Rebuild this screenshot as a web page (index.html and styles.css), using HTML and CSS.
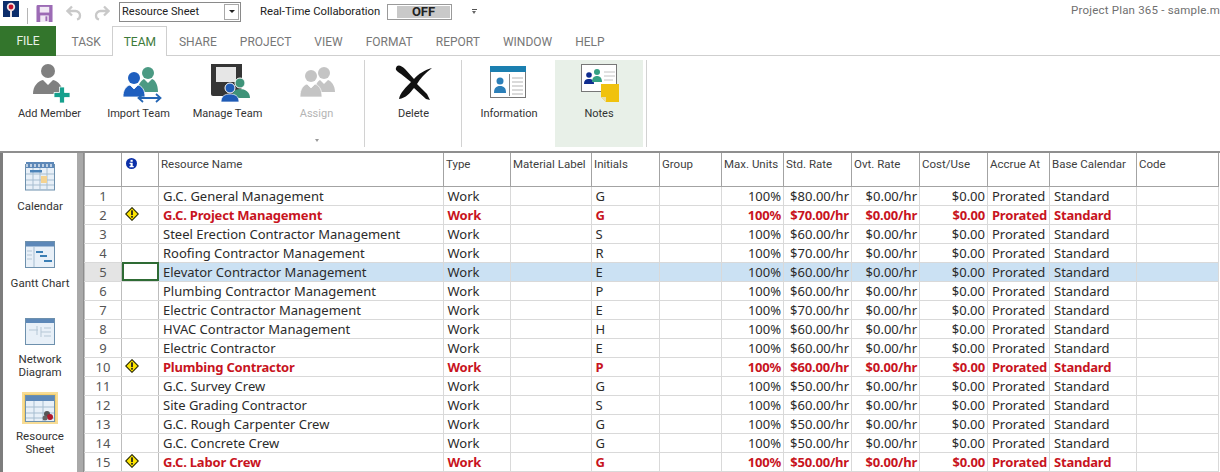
FILE: index.html
```html
<!DOCTYPE html>
<html lang="en">
<head>
<meta charset="utf-8">
<title>Project Plan 365 - Resource Sheet</title>
<link rel="stylesheet" href="styles.css">
</head>
<body>
<svg class="defs" width="0" height="0" aria-hidden="true">
  <defs>
    <symbol id="warn" viewBox="0 0 16 16">
      <path d="M8 .8 15.2 8 8 15.2.8 8Z" fill="#ffe600" stroke="#2a2a00" stroke-width="1.3"/>
      <rect x="7" y="3.8" width="2" height="5.4" fill="#222"/>
      <rect x="7" y="10.2" width="2" height="2" fill="#222"/>
    </symbol>
  </defs>
</svg>
<div class="app">
  <header class="titlebar">
    <svg class="logo" width="16" height="17" viewBox="0 0 16 17"><rect width="16" height="16" fill="#0c2d6b"/><circle cx="8" cy="6" r="4.2" fill="#f2dfe0"/><circle cx="8" cy="6" r="2.4" fill="#c5122c"/><rect x="7" y="10" width="2" height="6" fill="#e9e3e3"/></svg>
    <span class="qsep"></span>
    <svg class="qicon save" width="17" height="17" viewBox="0 0 17 18"><path d="M0 1.5A1.5 1.5 0 0 1 1.500 0H17V18H0Z" fill="#9c6bb5"/><rect x="3.500" y="2" width="10" height="6" fill="#f1e9f5"/><rect x="4" y="11" width="9" height="7" fill="#f1e9f5"/><rect x="9.500" y="12" width="2" height="5" fill="#9c6bb5"/></svg>
    <svg class="qicon undo" width="16" height="16" viewBox="0 0 16 16"><path d="M6 1.500 1.500 6 6 10.500M2 6H9.500A4.500 4.500 0 0 1 14 10.500 4 4 0 0 1 11 14.500" fill="none" stroke="#c9c9c9" stroke-width="2.300"/></svg>
    <svg class="qicon redo" width="16" height="16" viewBox="0 0 16 16"><path d="M10 1.500 14.500 6 10 10.500M14 6H6.500A4.500 4.500 0 0 0 2 10.500 4 4 0 0 0 5 14.500" fill="none" stroke="#c9c9c9" stroke-width="2.300"/></svg>
    <div class="combo"><span class="combo-text">Resource Sheet</span><span class="combo-btn"><i class="caret"></i></span></div>
    <span class="rtc">Real-Time Collaboration</span>
    <div class="toggle"><span class="toggle-knob"></span><span class="toggle-off">OFF</span></div>
    <span class="qat-more"><i class="bar"></i><i class="caret small"></i></span>
    <span class="apptitle">Project Plan 365 - sample.m</span>
  </header>

  <nav class="tabs">
    <span class="tab file">FILE</span>
    <span class="tab">TASK</span>
    <span class="tab active">TEAM</span>
    <span class="tab">SHARE</span>
    <span class="tab">PROJECT</span>
    <span class="tab">VIEW</span>
    <span class="tab">FORMAT</span>
    <span class="tab">REPORT</span>
    <span class="tab">WINDOW</span>
    <span class="tab">HELP</span>
  </nav>

  <section class="ribbon">
    <div class="group team">
      <div class="rbtn">
        <svg class="ricon" viewBox="0 0 48 44"><circle cx="22" cy="10" r="7" fill="#808080"/><path d="M7 33C7 25 12 20 17 19L22 24 27 19C32 20 37 25 37 33Z" fill="#808080"/><path d="M33.500 26H38.500V31.500H44V36.500H38.500V42H33.500V36.500H28V31.500H33.500Z" fill="#16a08d" stroke="#fff" stroke-width=".8"/></svg>
        <span>Add Member</span>
      </div>
      <div class="rbtn">
        <svg class="ricon" viewBox="0 0 48 44"><circle cx="33" cy="12" r="6" fill="#4b9a83"/><path d="M23 30C23 22 27 19 29 18L33 22 37 18C40 19 43 23 43 31H23Z" fill="#4b9a83"/><circle cx="19" cy="17" r="6" fill="#1f5fbf"/><path d="M8 36C8 29 11 25 15 24L19 28 23 24C27 25 30 29 30 36Z" fill="#1f5fbf" stroke="#fff" stroke-width=".8"/><path d="M24 37H45M28 33 23.500 37 28 41M41 33 45.500 37 41 41" fill="none" stroke="#2465b4" stroke-width="1.800"/></svg>
        <span>Import Team</span>
      </div>
      <div class="rbtn">
        <svg class="ricon" viewBox="0 0 48 44"><path d="M7 3H38V27L26 35H9A2 2 0 0 1 7 33Z" fill="#353535"/><rect x="12" y="6" width="20" height="15" fill="#e6e6e6"/><circle cx="36" cy="22" r="5" fill="#3f9379" stroke="#fff"/><path d="M28 37C28 31 31 28 36 28S46 31 46 37Z" fill="#3f9379"/><circle cx="26" cy="27" r="5" fill="#1f5bb5" stroke="#fff"/><path d="M17 41C17 35 21 33 26 33S35 35 35 41Z" fill="#1f5bb5" stroke="#fff" stroke-width=".7"/></svg>
        <span>Manage Team</span>
      </div>
      <div class="rbtn disabled">
        <svg class="ricon" viewBox="0 0 48 44"><circle cx="31" cy="12" r="6" fill="#c4c4c4"/><path d="M22 31C22 23 25 20 27 19L31 23 35 19C38 20 42 24 42 31Z" fill="#c4c4c4"/><circle cx="18" cy="15" r="6" fill="#c4c4c4"/><path d="M7 36C7 27 11 24 14 23L18 27 22 23C25 24 29 27 29 36Z" fill="#c4c4c4" stroke="#fff" stroke-width=".7"/></svg>
        <span>Assign</span>
        <i class="caret small assign-caret"></i>
      </div>
    </div>
    <div class="group delete">
      <div class="rbtn wide">
        <svg class="ricon" viewBox="0 0 48 44"><path d="M6 7C7 3 11 4 15 8L24 18C28 13 35 9 42 7 35 12 30 18 27 23L37 33 40 39 36 38 24 27C20 32 16 37 9 38 10 32 16 26 21 21L11 13C8 11 5 9 6 7Z" fill="#111"/></svg>
        <span>Delete</span>
      </div>
    </div>
    <div class="group info">
      <div class="rbtn info-btn">
        <svg class="ricon" viewBox="0 0 48 44"><rect x="5.500" y="5.500" width="35" height="31" fill="#fff" stroke="#777"/><rect x="5" y="5" width="36" height="6" fill="#1b7fb0"/><circle cx="15" cy="20" r="3.500" fill="#2c7fb8"/><path d="M9 32C9 27 11 25 15 25S21 27 21 32Z" fill="#2c7fb8"/><path d="M24.500 13V35" stroke="#888"/><path d="M27 17H38M27 21H38M27 25H38M27 29H38M27 33H38" stroke="#b5b5b5"/></svg>
        <span>Information</span>
      </div>
      <div class="rbtn notes">
        <svg class="ricon" viewBox="0 0 48 44"><rect x="6.500" y="3.500" width="35" height="27" fill="#fff" stroke="#777"/><circle cx="14" cy="14" r="2.800" fill="#0f2d8f"/><path d="M9 23C9 19 11 18 14 18S19 19 19 23Z" fill="#0f2d8f"/><circle cx="22" cy="11" r="3" fill="#35a184"/><path d="M17 21C17 17 19 15 22 15S27 17 27 21Z" fill="#35a184"/><path d="M29 11H40M29 15H40M29 19H38" stroke="#c4c4c4"/><path d="M26 23H44V41H31L26 36Z" fill="#f0c20e"/><path d="M26 36H31V41Z" fill="#e7dfae"/></svg>
        <span>Notes</span>
      </div>
    </div>
  </section>

  <main class="workspace">
    <aside class="viewbar">
      <div class="view">
        <svg class="vicon" width="30" height="30" viewBox="0 0 30 30"><rect x=".5" y="3.500" width="29" height="25.500" fill="#e8f0f8" stroke="#6d90ad"/><rect x="1" y="1" width="28" height="6" fill="#5d88b8"/><path d="M2 3V6M6 3V6M10 3V6M14 3V6M18 3V6M22 3V6M26 3V6" stroke="#fff" stroke-width="1.200"/><path d="M1 13H29M1 19H29M1 24H29M8 7V29M15 7V29M22 7V29" stroke="#a6bdd0"/><rect x="5" y="9" width="12" height="2.500" fill="#4c84b9"/><rect x="16" y="15" width="6" height="7" fill="#f4d392"/></svg>
        <span>Calendar</span>
      </div>
      <div class="view">
        <svg class="vicon" width="30" height="27" viewBox="0 0 30 27"><rect x=".5" y=".5" width="29" height="26" fill="#e8f0f8" stroke="#6d90ad"/><rect x="1" y="1" width="28" height="4.500" fill="#5d88b8"/><path d="M9 6V26" stroke="#a6bdd0"/><rect x="11" y="10" width="7" height="2" fill="#3b7fb5"/><rect x="15" y="14" width="7" height="2" fill="#3b7fb5"/><rect x="19" y="19" width="8" height="2" fill="#3b7fb5"/><path d="M2 10H7M2 14H7M2 18H7" stroke="#b5c7d6"/></svg>
        <span>Gantt Chart</span>
      </div>
      <div class="view">
        <svg class="vicon" width="30" height="27" viewBox="0 0 30 27"><rect x=".5" y=".5" width="29" height="26" fill="#e8f0f8" stroke="#6d90ad"/><rect x="1" y="1" width="28" height="4" fill="#5d88b8"/><path d="M4 12H13M16 9V19M16 14H26M19 10H26M19 18H26M12 8V17" stroke="#b5c7d6"/></svg>
        <span>Network<br>Diagram</span>
      </div>
      <div class="view current">
        <span class="vframe">
          <svg width="30" height="27" viewBox="0 0 30 27"><rect x=".5" y=".5" width="29" height="26" fill="#e8f0f8" stroke="#6d90ad"/><rect x="1" y="1" width="28" height="5" fill="#5d88b8"/><path d="M1 12H29M1 18H29M1 23H29M9 6V26M18 6V26" stroke="#a6bdd0"/><circle cx="22" cy="19" r="3" fill="#555"/><circle cx="25" cy="22" r="3" fill="#b1182a"/><circle cx="20" cy="23" r="2.500" fill="#666"/></svg>
        </span>
        <span>Resource<br>Sheet</span>
      </div>
    </aside>
    <div class="splitter"></div>
    <div class="sheet">
      <table class="grid">
        <colgroup>
          <col class="c-id"><col class="c-ind"><col class="c-name"><col class="c-type"><col class="c-mat"><col class="c-ini"><col class="c-grp"><col class="c-max"><col class="c-std"><col class="c-ovt"><col class="c-cost"><col class="c-acc"><col class="c-base"><col class="c-code">
        </colgroup>
        <thead>
          <tr>
            <th></th>
            <th><svg class="infoicon" width="11" height="11" viewBox="0 0 11 11"><circle cx="5.500" cy="5.500" r="5.500" fill="#0b2fa8"/><rect x="4.500" y="1.800" width="2.200" height="2" fill="#fff"/><path d="M3.500 4.700H6.700V8H7.700V9.300H3.500V8H4.500V6H3.500Z" fill="#fff"/></svg></th>
            <th>Resource Name</th><th>Type</th><th>Material Label</th><th>Initials</th><th>Group</th><th>Max. Units</th><th>Std. Rate</th><th>Ovt. Rate</th><th>Cost/Use</th><th>Accrue At</th><th>Base Calendar</th><th>Code</th>
          </tr>
        </thead>
        <tbody>
          <tr><td class="id">1</td><td></td><td class="name">G.C. General Management</td><td>Work</td><td></td><td>G</td><td></td><td class="num">100%</td><td class="num">$80.00/hr</td><td class="num">$0.00/hr</td><td class="num">$0.00</td><td>Prorated</td><td>Standard</td><td></td></tr>
          <tr class="over"><td class="id">2</td><td class="ind"><svg class="warn"><use href="#warn"/></svg></td><td class="name">G.C. Project Management</td><td>Work</td><td></td><td>G</td><td></td><td class="num">100%</td><td class="num">$70.00/hr</td><td class="num">$0.00/hr</td><td class="num">$0.00</td><td>Prorated</td><td>Standard</td><td></td></tr>
          <tr><td class="id">3</td><td></td><td class="name">Steel Erection Contractor Management</td><td>Work</td><td></td><td>S</td><td></td><td class="num">100%</td><td class="num">$60.00/hr</td><td class="num">$0.00/hr</td><td class="num">$0.00</td><td>Prorated</td><td>Standard</td><td></td></tr>
          <tr><td class="id">4</td><td></td><td class="name">Roofing Contractor Management</td><td>Work</td><td></td><td>R</td><td></td><td class="num">100%</td><td class="num">$70.00/hr</td><td class="num">$0.00/hr</td><td class="num">$0.00</td><td>Prorated</td><td>Standard</td><td></td></tr>
          <tr class="selected"><td class="id">5</td><td class="cursor"></td><td class="name">Elevator Contractor Management</td><td>Work</td><td></td><td>E</td><td></td><td class="num">100%</td><td class="num">$60.00/hr</td><td class="num">$0.00/hr</td><td class="num">$0.00</td><td>Prorated</td><td>Standard</td><td></td></tr>
          <tr><td class="id">6</td><td></td><td class="name">Plumbing Contractor Management</td><td>Work</td><td></td><td>P</td><td></td><td class="num">100%</td><td class="num">$60.00/hr</td><td class="num">$0.00/hr</td><td class="num">$0.00</td><td>Prorated</td><td>Standard</td><td></td></tr>
          <tr><td class="id">7</td><td></td><td class="name">Electric Contractor Management</td><td>Work</td><td></td><td>E</td><td></td><td class="num">100%</td><td class="num">$70.00/hr</td><td class="num">$0.00/hr</td><td class="num">$0.00</td><td>Prorated</td><td>Standard</td><td></td></tr>
          <tr><td class="id">8</td><td></td><td class="name">HVAC Contractor Management</td><td>Work</td><td></td><td>H</td><td></td><td class="num">100%</td><td class="num">$60.00/hr</td><td class="num">$0.00/hr</td><td class="num">$0.00</td><td>Prorated</td><td>Standard</td><td></td></tr>
          <tr><td class="id">9</td><td></td><td class="name">Electric Contractor</td><td>Work</td><td></td><td>E</td><td></td><td class="num">100%</td><td class="num">$60.00/hr</td><td class="num">$0.00/hr</td><td class="num">$0.00</td><td>Prorated</td><td>Standard</td><td></td></tr>
          <tr class="over"><td class="id">10</td><td class="ind"><svg class="warn"><use href="#warn"/></svg></td><td class="name">Plumbing Contractor</td><td>Work</td><td></td><td>P</td><td></td><td class="num">100%</td><td class="num">$60.00/hr</td><td class="num">$0.00/hr</td><td class="num">$0.00</td><td>Prorated</td><td>Standard</td><td></td></tr>
          <tr><td class="id">11</td><td></td><td class="name">G.C. Survey Crew</td><td>Work</td><td></td><td>G</td><td></td><td class="num">100%</td><td class="num">$50.00/hr</td><td class="num">$0.00/hr</td><td class="num">$0.00</td><td>Prorated</td><td>Standard</td><td></td></tr>
          <tr><td class="id">12</td><td></td><td class="name">Site Grading Contractor</td><td>Work</td><td></td><td>S</td><td></td><td class="num">100%</td><td class="num">$60.00/hr</td><td class="num">$0.00/hr</td><td class="num">$0.00</td><td>Prorated</td><td>Standard</td><td></td></tr>
          <tr><td class="id">13</td><td></td><td class="name">G.C. Rough Carpenter Crew</td><td>Work</td><td></td><td>G</td><td></td><td class="num">100%</td><td class="num">$50.00/hr</td><td class="num">$0.00/hr</td><td class="num">$0.00</td><td>Prorated</td><td>Standard</td><td></td></tr>
          <tr><td class="id">14</td><td></td><td class="name">G.C. Concrete Crew</td><td>Work</td><td></td><td>G</td><td></td><td class="num">100%</td><td class="num">$50.00/hr</td><td class="num">$0.00/hr</td><td class="num">$0.00</td><td>Prorated</td><td>Standard</td><td></td></tr>
          <tr class="over"><td class="id">15</td><td class="ind"><svg class="warn"><use href="#warn"/></svg></td><td class="name">G.C. Labor Crew</td><td>Work</td><td></td><td>G</td><td></td><td class="num">100%</td><td class="num">$50.00/hr</td><td class="num">$0.00/hr</td><td class="num">$0.00</td><td>Prorated</td><td>Standard</td><td></td></tr>
        </tbody>
      </table>
    </div>
  </main>
</div>
</body>
</html>
```

FILE: styles.css
```css
* { box-sizing: border-box; }
html, body { margin: 0; padding: 0; height: 100%; background: #fff; overflow: hidden; }
body { font-family: "Noto Sans", "Open Sans", sans-serif; color: #2b2b2b; }
.defs { display: block; height: 0; }
.app { width: 1220px; height: 472px; display: flex; flex-direction: column; overflow: hidden; }

/* title bar */
.titlebar { height: 26px; flex: none; display: flex; align-items: center; padding-bottom: 3px; position: relative; font-family: Roboto, sans-serif; font-size: 11px; white-space: nowrap; }
.logo { margin: 0 0 5px 3px; flex: none; }
.qsep { width: 1px; height: 16px; background: #b5b5b5; margin: 8px 0 0 8px; flex: none; }
.qicon { flex: none; }
.save { margin-left: 8px; margin-top: 3px; }
.undo { margin-left: 13px; margin-top: 3px; }
.redo { margin-left: 12px; margin-top: 3px; }
.combo { width: 122px; height: 20px; border: 1px solid #8a8a8a; display: flex; align-items: center; justify-content: space-between; padding: 1px; flex: none; margin-left: 9px; }
.combo-text { font-size: 11px; color: #222; padding-left: 1px; letter-spacing: .05px; }
.combo-btn { width: 15px; height: 16px; border: 1px solid #a8a8a8; display: flex; align-items: center; justify-content: center; }
.caret { display: block; width: 0; height: 0; border-left: 3px solid transparent; border-right: 3px solid transparent; border-top: 3px solid #222; }
.caret.small { border-left-width: 2.500px; border-right-width: 2.500px; border-top-width: 3px; border-top-color: #666; }
.rtc { margin-left: 19px; font-size: 11.300px; color: #222; width: 127px; flex: none; }
.toggle { width: 65px; height: 16px; border: 1px solid #9a9a9a; padding: 1px; display: flex; flex: none; }
.toggle-knob { width: 8px; background: #fff; }
.toggle-off { flex: 1; background: #c9c9c9; text-align: center; font-weight: 700; font-size: 13px; line-height: 12px; color: #222; }
.qat-more { margin-left: 19px; display: flex; flex-direction: column; align-items: center; gap: 1px; flex: none; width: 6px; }
.qat-more .bar { display: block; width: 5px; height: 1px; background: #555; }
.apptitle { position: absolute; left: 1071px; top: 3px; font-size: 11.500px; color: #6f6f6f; letter-spacing: .2px; }

/* tabs */
.tabs { height: 30px; flex: none; display: flex; align-items: stretch; border-bottom: 1px solid #cfcfcf; font-family: Roboto, sans-serif; font-size: 12px; color: #777; }
.tab { display: flex; align-items: center; padding: 0 10.500px; margin-bottom: -1px; border: 1px solid transparent; border-bottom: 0; }
.tab.file { width: 56px; justify-content: center; padding: 0; background: #33752c; color: #e9f2e7; border: 0; margin-right: 4px; height: 30px; }
.tab.active { background: #fff; color: #3d7a3a; border-color: #cfcfcf; }

/* ribbon */
.ribbon { height: 95px; flex: none; display: flex; padding: 5px 0 4px 5px; font-family: Roboto, sans-serif; font-size: 11px; }
.group { display: flex; border-right: 1px solid #d2d2d2; padding-right: 3px; margin-top: -1px; }
.group.delete { padding-right: 0; margin-left: 1px; }
.group.info { margin-left: 1px; padding-right: 3px; }
.rbtn { width: 89px; display: flex; flex-direction: column; align-items: center; padding-top: 1px; color: #333; position: relative; }
.rbtn.wide { width: 95px; }
.rbtn.info-btn { width: 92px; }
.rbtn.notes { width: 88px; background: #e8f0e8; }
.rbtn span { line-height: 16px; margin-top: 1px; }
.ricon { width: 48px; height: 44px; display: block; margin-bottom: 0; }
.rbtn.disabled { color: #b4b4b4; }
.assign-caret { position: absolute; left: 43px; top: 79px; border-top-color: #999 !important; }

/* workspace */
.workspace { flex: 1; min-height: 0; display: flex; border-top: 2px solid #8f8f8f; }
.viewbar { width: 77px; flex: none; border-left: 3px solid #7d7d7d; display: flex; flex-direction: column; font-family: Roboto, sans-serif; font-size: 11.500px; color: #333; padding-top: 8px; margin-left: 0; background: #fff; }
.view { height: 77px; flex: none; display: flex; flex-direction: column; align-items: center; text-align: center; line-height: 13px; }
.view:nth-child(1) { padding-top: 0; }
.view:nth-child(1) span { margin-top: 9px; }
.view:nth-child(2) { padding-top: 3px; }
.view:nth-child(2) span { margin-top: 9px; }
.view:nth-child(3) { padding-top: 3px; }
.view:nth-child(3) span { margin-top: 8px; }
.vicon { display: block; flex: none; }
.vframe { display: flex; width: 36px; height: 32px; background: #f5cf6d; border: 2px solid #f7dc95; align-items: center; justify-content: center; margin-bottom: 6px; flex: none; }
.view.current { padding-top: 0; }
.splitter { width: 7px; flex: none; background: #a9a9a9; border-right: 1px solid #8d8d8d; }

/* sheet */
.sheet { flex: 1; min-width: 0; overflow: hidden; }
.grid { table-layout: fixed; width: 1134px; border-collapse: collapse; font-size: 13px; color: #2b2b2b; }
.c-id { width: 37px; }
.c-ind { width: 37px; }
.c-name { width: 285px; }
.c-type { width: 67px; }
.c-mat { width: 81px; }
.c-ini { width: 68px; }
.c-grp { width: 62px; }
.c-max { width: 62px; }
.c-std { width: 68px; }
.c-ovt { width: 68px; }
.c-cost { width: 68px; }
.c-acc { width: 62px; }
.c-base { width: 87px; }
.c-code { width: 82px; }
th { height: 33px; font-weight: 400; font-family: Roboto, sans-serif; font-size: 11.500px; color: #404040; text-align: left; vertical-align: top; padding: 4px 0 0 2px; border: 1px solid #a3a3a3; border-top: 0; white-space: nowrap; overflow: hidden; }
th:first-child { border-left: 1px solid #a3a3a3; }
.infoicon { display: block; margin: 1px 0 0 2px; }
td { height: 19px; padding: 0 0 0 3.500px; border: 1px solid #d9d9d9; border-top: 0; line-height: 18px; white-space: nowrap; overflow: hidden; }
td:first-child, td:nth-child(2) { border-right-color: #bdbdbd; }
td:nth-child(12), td:nth-child(13) { padding-left: 4px; }
td.id { text-align: center; padding: 0; color: #555; border-left: 1px solid #bdbdbd; }
td.name { padding-left: 4px; }
td.num { text-align: right; padding: 0 2px 0 0; }
.ind { padding: 0 0 0 3px; vertical-align: top; }
.warn { display: block; width: 14px; height: 14px; margin-top: 1px; }
.over td { color: #c8141e; font-weight: 700; letter-spacing: -.2px; }
.over td.id { color: #555; font-weight: 400; letter-spacing: 0; }
.selected td { background: #cbe1f3; }
.selected td.id { background: #e4e4e4; }
.selected td.cursor { background: #fff; outline: 2px solid #2e6b34; outline-offset: -2px; }
```
